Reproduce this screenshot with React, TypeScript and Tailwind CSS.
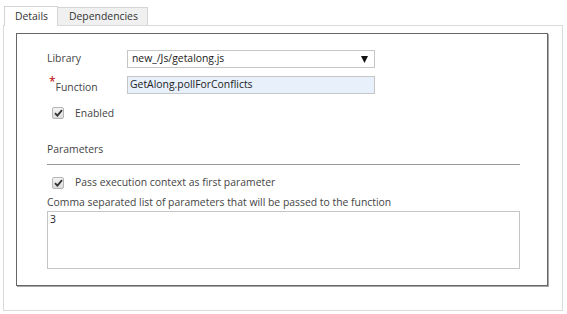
import React from "react";

function Check() {
  return (
    <span className="flex h-[12px] w-[12px] items-center justify-center rounded-[2px] border border-[#b5b5b5] bg-gradient-to-b from-[#f4f4f4] to-[#dcdcdc]">
      <svg width="9" height="8" viewBox="0 0 9 8">
        <path d="M1 4.2 L3.4 6.6 L8 1.2" fill="none" stroke="#333" strokeWidth="1.8" />
      </svg>
    </span>
  );
}

export default function App() {
  return (
    <div
      className="h-[314px] w-[567px] bg-white text-[10.4px] text-[#444]"
      style={{ fontFamily: '"Open Sans", "Noto Sans", sans-serif' }}
    >
      <div className="flex pl-[4px] pt-[6px]">
        <div className="relative z-10 -mb-px flex h-[20px] w-[54px] items-center border border-b-0 border-[#d4d4d4] bg-white pl-[10px] text-[#333]">
          Details
        </div>
        <div className="mt-[1px] flex h-[18px] w-[90px] items-center border border-l-0 border-b-0 border-[#d4d4d4] bg-[#f0f0f0] pl-[11px] text-[#333]">
          Dependencies
        </div>
      </div>
      <div className="ml-[3px] h-[286px] w-[560px] border border-[#d9d9d9] pl-[12px] pt-[7px]">
        <div className="h-[253px] w-[532px] border border-[#666] pl-[30px] pt-[16px] shadow-[1px_1px_0_#a8a8a8]">
          <div className="flex items-center">
            <div className="w-[80px]">Library</div>
            <div className="flex h-[18px] w-[248px] items-center justify-between border border-[#c6c6c6] pl-[4px] pr-[6px] text-[#222]">
              <span>new_/Js/getalong.js</span>
              <svg width="7" height="7" viewBox="0 0 7 7">
                <path d="M0 0 H7 L3.5 7 Z" fill="#111" />
              </svg>
            </div>
          </div>
          <div className="mt-[6px] flex items-center">
            <div className="flex w-[80px] pl-[2px] pt-[6px]">
              <span className="-mt-[4px] text-[12px] leading-none text-[#c00000]">*</span>
              <span>Function</span>
            </div>
            <div className="flex h-[18px] w-[248px] items-center border border-[#c6c6c6] bg-[#e8f0fc] pl-[2px] text-[#222]">
              GetAlong.pollForConflicts
            </div>
          </div>
          <div className="mt-[10px] flex items-center pl-[5px]">
            <Check />
            <span className="ml-[11px]">Enabled</span>
          </div>
          <div className="mt-[21px]">Parameters</div>
          <div className="mt-[6px] h-px w-[473px] bg-[#999]" />
          <div className="mt-[10px] flex items-center pl-[5px]">
            <Check />
            <span className="ml-[11px]">Pass execution context as first parameter</span>
          </div>
          <div className="mt-[5px]">Comma separated list of parameters that will be passed to the function</div>
          <div className="h-[58px] w-[473px] border border-[#c6c6c6] pl-[2px] text-[#222]">
            3
          </div>
        </div>
      </div>
    </div>
  );
}
